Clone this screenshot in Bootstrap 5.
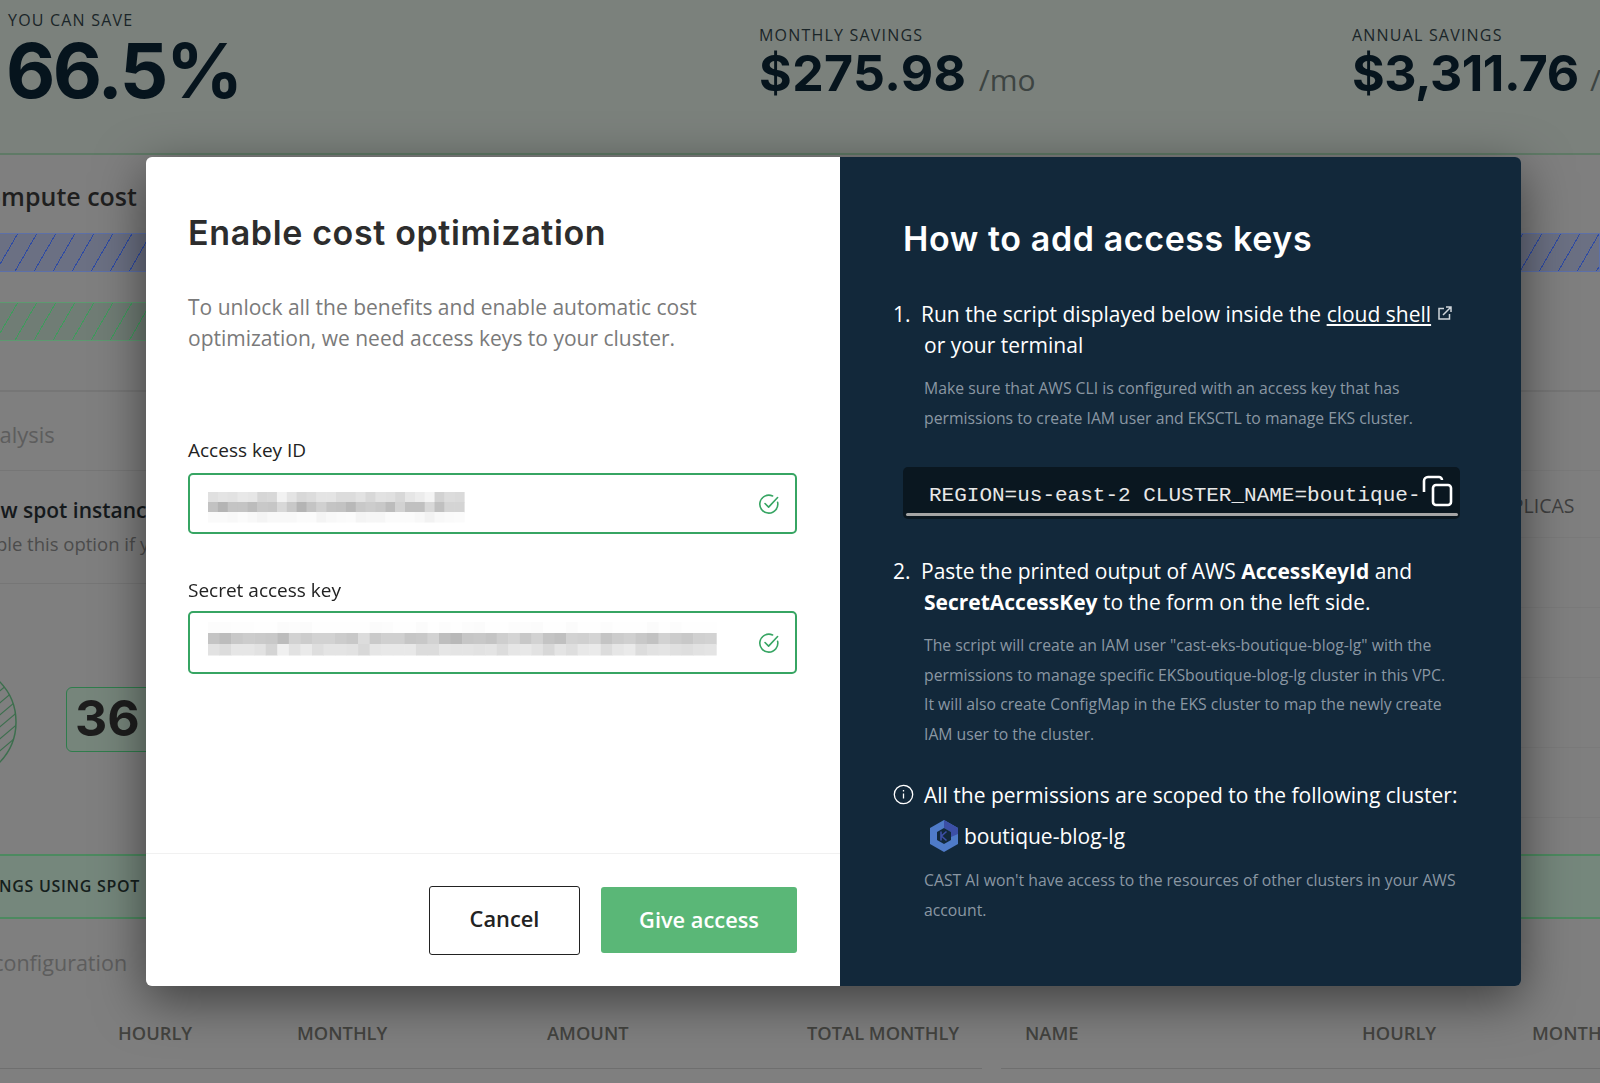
<!DOCTYPE html>
<html>

<head>
  <meta charset='utf-8'>
  <title>Enable cost optimization</title>
  <meta name='viewport' content='width=device-width, initial-scale=1'>
  <link rel="stylesheet" href="https://cdn.jsdelivr.net/npm/bootstrap@5.3.0/dist/css/bootstrap.min.css">
  <style>
    html, body { height: 100%; overflow: hidden; }
    body { background: #7f7f7f; font-family: "Open Sans", sans-serif; color: #2b2b2b; }
    .display-font { font-family: Inter, sans-serif; }

    /* dimmed page behind the dialog */
    .page-back { height: 1083px; overflow: hidden; }
    .save-band { height: 155px; background: #7b817c; border-bottom: 2px solid #5f7a66; display: grid; grid-template-columns: 759px 593px 1fr; color: #06141d; }
    .save-cell { padding-top: 25px; }
    .save-cell.first { padding-top: 10px; padding-left: 8px; }
    .save-label { font-size: 16px; letter-spacing: 1.2px; line-height: 20px; color: #1a2528; font-weight: 400; }
    .save-big { font-size: 76px; line-height: 80px; font-weight: 700; letter-spacing: -2.5px; margin-left: -2px; }
    .save-num { font-size: 50px; line-height: 56px; font-weight: 700; white-space: nowrap; letter-spacing: .4px; }
    .save-num.tight { letter-spacing: -.5px; }
    .save-unit { font-family: "Open Sans", sans-serif; font-size: 30px; font-weight: 400; color: #3d4442; letter-spacing: 0; }

    .cost-block { height: 237px; border-bottom: 2px solid #767676; padding-top: 25px; }
    .cost-title { font-size: 25px; font-weight: 600; line-height: 32px; margin-left: -30px; color: #1f1f1f; }
    .hatch-bar { height: 39px; border: 1px solid; margin-left: -2px; }
    .hatch-blue { margin-top: 21px; border-color: #5d70a8; background: repeating-linear-gradient(120deg, #6b7083 0 15.5px, #2f4ba3 15.5px 16.5px); }
    .hatch-green { margin-top: 30px; width: 60%; border-color: #5d9a70; background: repeating-linear-gradient(120deg, #707d75 0 15.5px, #3f9a5c 15.5px 16.5px); }

    .split-back { display: grid; grid-template-columns: 982px 599px; column-gap: 19px; }
    .back-row { border-bottom: 1px solid #767676; overflow: hidden; }
    .analysis-row { height: 79px; padding-top: 26px; font-size: 22px; color: #5d5d5d; }
    .analysis-row span { margin-left: -28px; }
    .spot-row { height: 113px; padding-top: 22px; }
    .spot-title { font-size: 21px; font-weight: 600; color: #15191c; line-height: 34px; margin-left: -38px; white-space: nowrap; }
    .spot-note { font-size: 18.5px; color: #4c4c4c; line-height: 34px; margin-left: -36px; white-space: nowrap; }
    .chart-row { height: 270px; padding-top: 103px; display: flex; gap: 48px; overflow: hidden; }
    .pie-edge { margin-left: -70px; flex: none; margin-top: -25px; }
    .count-box { width: 110px; height: 65px; flex: none; border: 1.5px solid #2f7d4c; border-radius: 6px; background: #76857b; font-size: 50px; font-weight: 700; line-height: 60px; padding-left: 8px; color: #1d1d1d; }
    .replica-row { height: 67px; padding-top: 20px; padding-left: 488px; font-size: 19.5px; color: #3f3f3f; white-space: nowrap; border-color: #7a7a7a; }
    .thin-row { height: 70px; border-bottom: 1px solid #7a7a7a; }

    .green-band { height: 65px; background: #75877c; border-top: 2px solid #4d8a60; border-bottom: 2px solid #4d8a60; line-height: 61px; font-size: 16px; letter-spacing: .7px; font-weight: 600; color: #15201c; white-space: nowrap; }
    .green-band span { margin-left: -38px; }
    .config-title { height: 82px; padding-top: 28px; font-size: 21.5px; color: #5d5d5d; }
    .config-title span { margin-left: -97px; }
    .table-heads { display: grid; grid-template-columns: 982px 599px; column-gap: 19px; }
    .table-heads > div { height: 68px; border-bottom: 1px solid #6f6f6f; display: flex; font-size: 18.3px; font-weight: 600; color: #43433f; padding-top: 18px; white-space: nowrap; }
    .table-heads span { flex: none; }
    .th-a { width: 179px; } .th-b { width: 250px; } .th-c { width: 260px; }

    /* dialog */
    .cost-dialog { max-width: none; width: 1375px; margin: 157px 0 0 146px; }
    .cost-dialog .modal-content { height: 829px; border: 0; border-radius: 6px; overflow: hidden; flex-direction: row; background: transparent; box-shadow: 0 14px 50px rgba(0, 0, 0, .5); }
    .left-pane { width: 694px; flex: none; background: #fff; display: flex; flex-direction: column; }
    .left-main { padding: 53px 43px 0 42px; flex: 1; }
    .left-main h2 { font-family: Inter, sans-serif; font-weight: 600; font-size: 34px; letter-spacing: .64px; line-height: 46px; color: #2d2d2d; margin: 0 0 36px; }
    .left-main p { font-size: 21px; font-weight: 400; line-height: 31px; color: #7a7a7a; margin: 0 0 84px; }
    .field-label { font-size: 19px; line-height: 24px; color: #222; margin-bottom: 11px; display: block; }
    .key-box { height: 61px; border: 2px solid #37a563; border-radius: 5px; margin-bottom: 44px; display: flex; align-items: center; justify-content: space-between; padding: 0 15px 0 18px; }
    .key-box + .field-label { margin-bottom: 9px; }
    .key-box + .field-label + .key-box { height: 63px; }
    .left-foot { height: 133px; border-top: 1px solid #f1f1f1; display: flex; justify-content: flex-end; align-items: center; gap: 21px; padding: 0 43px 0 0; }
    .btn-cancel, .btn-access { font-size: 21.8px; font-weight: 600; border-radius: 3px; padding: 0; }
    .btn-cancel { width: 151px; height: 69px; border: 1.5px solid #222; color: #222; background: #fff; padding-bottom: 2px; }
    .btn-access { width: 196px; height: 66px; background: #5ab777; border: 0; color: #fff; }

    .right-pane { flex: 1; background: #12283a; color: #fff; padding: 57px 62px 0 63px; }
    .right-pane h2 { font-family: Inter, sans-serif; font-weight: 600; font-size: 34px; letter-spacing: .6px; line-height: 50px; margin: 0 0 35px; }
    .step-line { font-size: 21px; line-height: 31px; margin-left: -10px; position: relative; padding-left: 28px; }
    .step-line b { font-weight: 700; }
    .step-line a { color: #fff; }
    .step-line .step-wrap { margin-left: 3px; }
    .step-no { position: absolute; left: 0; top: 0; }
    .step-note { font-size: 15.75px; line-height: 29.5px; color: #8a97a3; margin-left: 21px; margin-top: 13px; white-space: nowrap; }
    .code-box { position: relative; height: 52px; background: #0a1720; border-radius: 5px; margin: 34px -1px 0 0; padding: 14px 0 0 26px; overflow: hidden; font-family: "Liberation Mono", monospace; font-size: 21px; line-height: 30px; color: #e8e8e8; white-space: nowrap; }
    .code-bar { position: absolute; left: 3px; right: 2px; bottom: 3px; height: 3px; border-radius: 2px; background: #a5a5a5; }
    .copy-mark { position: absolute; right: 6px; top: 8px; }
    .info-mark { position: absolute; left: 0; top: 4px; }
    .cluster-line { display: flex; align-items: center; gap: 4px; font-size: 21px; line-height: 31px; margin: 8px 0 0 25px; }
  </style>
</head>

<body>
  <div class="page-back">
    <div class="save-band">
      <div class="save-cell first">
        <div class="save-label">YOU CAN SAVE</div>
        <div class="save-big display-font">66.5%</div>
      </div>
      <div class="save-cell">
        <div class="save-label">MONTHLY SAVINGS</div>
        <div class="save-num display-font">$275.98 <span class="save-unit">/mo</span></div>
      </div>
      <div class="save-cell">
        <div class="save-label">ANNUAL SAVINGS</div>
        <div class="save-num tight display-font">$3,311.76 <span class="save-unit">/yr</span></div>
      </div>
    </div>

    <div class="cost-block">
      <div class="cost-title">Compute cost</div>
      <div class="hatch-bar hatch-blue"></div>
      <div class="hatch-bar hatch-green"></div>
    </div>

    <div class="split-back">
      <div>
        <div class="back-row analysis-row"><span>Analysis</span></div>
        <div class="back-row spot-row">
          <div class="spot-title">Allow spot instances</div>
          <div class="spot-note">Enable this option if you</div>
        </div>
        <div class="chart-row">
          <svg class="pie-edge" width="88" height="120" viewBox="0 0 88 120">
            <defs>
              <clipPath id="pieClip"><circle cx="28" cy="60" r="58"></circle></clipPath>
            </defs>
            <circle cx="28" cy="60" r="58" fill="none" stroke="#3d6f4e" stroke-width="1.5"></circle>
            <g clip-path="url(#pieClip)" stroke="#3d6f4e" stroke-width="1.2" id="pieLines"></g>
          </svg>
          <div class="count-box display-font">36</div>
        </div>
      </div>
      <div>
        <div class="thin-row" style="height:79px"></div>
        <div class="replica-row back-row">REPLICAS</div>
        <div class="thin-row"></div>
        <div class="thin-row"></div>
        <div class="thin-row"></div>
        <div class="thin-row"></div>
      </div>
    </div>

    <div class="green-band"><span>SAVINGS USING SPOT INSTANCES</span></div>
    <div class="config-title"><span>Instance configuration</span></div>
    <div class="table-heads">
      <div>
        <span style="width:118px"></span><span class="th-a">HOURLY</span><span class="th-b">MONTHLY</span><span class="th-c">AMOUNT</span><span>TOTAL MONTHLY</span>
      </div>
      <div>
        <span style="width:24px"></span><span style="width:337px">NAME</span><span style="width:170px">HOURLY</span><span>MONTHLY</span>
      </div>
    </div>
  </div>

  <div class="modal d-block" tabindex="-1">
    <div class="modal-dialog cost-dialog">
      <div class="modal-content">
        <div class="left-pane">
          <div class="left-main">
            <h2>Enable cost optimization</h2>
            <p>To unlock all the benefits and enable automatic cost<br>optimization, we need access keys to your cluster.</p>

            <label class="field-label">Access key ID</label>
            <div class="key-box">
              <svg class="blur-keys" data-set="0" width="290" height="44"></svg>
              <svg width="22" height="22" viewBox="0 0 22 22" fill="none" stroke="#37a563" stroke-width="1.6" stroke-linecap="round" stroke-linejoin="round">
                <path d="M19.6 9.2A9 9 0 1 1 14.6 3"></path>
                <path d="M7 10.5l3.6 3.6 9-9.6"></path>
              </svg>
            </div>

            <label class="field-label">Secret access key</label>
            <div class="key-box">
              <svg class="blur-keys" data-set="1" width="520" height="44"></svg>
              <svg width="22" height="22" viewBox="0 0 22 22" fill="none" stroke="#37a563" stroke-width="1.6" stroke-linecap="round" stroke-linejoin="round">
                <path d="M19.6 9.2A9 9 0 1 1 14.6 3"></path>
                <path d="M7 10.5l3.6 3.6 9-9.6"></path>
              </svg>
            </div>
          </div>
          <div class="left-foot">
            <button class="btn btn-cancel" type="button">Cancel</button>
            <button class="btn btn-access" type="button">Give access</button>
          </div>
        </div>

        <div class="right-pane">
          <h2>How to add access keys</h2>

          <div class="step-line">
            <span class="step-no">1.</span>Run the script displayed below inside the <a href="#!">cloud shell</a>
            <svg width="15" height="15" viewBox="0 0 15 15" fill="none" stroke="#cfd5da" stroke-width="1.5" style="vertical-align:1px">
              <path d="M7 2.500H2v10.500h10.500V8"></path>
              <path d="M6 9l7.500-7.500M9 1h5v5"></path>
            </svg>
            <br><span class="step-wrap">or your terminal</span>
          </div>
          <div class="step-note">Make sure that AWS CLI is configured with an access key that has<br>permissions to create IAM user and EKSCTL to manage EKS cluster.</div>

          <div class="code-box">
            REGION=us-east-2 CLUSTER_NAME=boutique-
            <svg class="copy-mark" width="33" height="32" viewBox="0 0 33 32" fill="none" stroke="#fff" stroke-width="2.6" stroke-linejoin="round">
              <path d="M3 17V6a4 4 0 0 1 4-4h11a3 3 0 0 1 3 3"></path>
              <rect x="12" y="10" width="18" height="20" rx="3" fill="#0a1720"></rect>
            </svg>
            <div class="code-bar"></div>
          </div>

          <div class="step-line" style="margin-top:37px">
            <span class="step-no">2.</span>Paste the printed output of AWS <b>AccessKeyId</b> and<br><span class="step-wrap"><b>SecretAccessKey</b> to the form on the left side.</span>
          </div>
          <div class="step-note">The script will create an IAM user "cast-eks-boutique-blog-lg" with the<br>permissions to manage specific EKSboutique-blog-lg cluster in this VPC.<br>It will also create ConfigMap in the EKS cluster to map the newly create<br>IAM user to the cluster.</div>

          <div class="step-line" style="margin-top:31px;padding-left:31px">
            <svg class="info-mark" width="21" height="21" viewBox="0 0 21 21" fill="none" stroke="#fff" stroke-width="1.3">
              <circle cx="10.500" cy="10.500" r="9.200"></circle>
              <path d="M10.500 9.500v5M10.500 6v1.600"></path>
            </svg>
            All the permissions are scoped to the following cluster:
          </div>
          <div class="cluster-line">
            <svg width="32" height="34" viewBox="0 0 32 34">
              <path d="M16 1L30 9v16l-14 8L2 25V9z" fill="#4f7bc8"></path>
              <path d="M16 1L30 9v6l-7 3v-5l-7-4z" fill="#3c4fa6"></path>
              <path d="M16 9l7 4v8l-7 4-7-4v-8z" fill="#12283a"></path>
              <path d="M13 12.500v9M18.500 12.500L13.500 17l5 4.500" fill="none" stroke="#3c4fa6" stroke-width="1.6"></path>
            </svg>
            boutique-blog-lg
          </div>
          <div class="step-note" style="margin-top:13px">CAST AI won't have access to the resources of other clusters in your AWS<br>account.</div>
        </div>
      </div>
    </div>
  </div>

  <script src="https://cdn.jsdelivr.net/npm/bootstrap@5.3.0/dist/js/bootstrap.bundle.min.js"></script>
  <script>
    // pixelated key values, grey levels per cell
    const keySets = [
      { w: 9.85, h: 10, top: 10, rows: [
        [0xe0,0xe4,0xe2,0xe8,0xe6,0xd6,0xd8,0xf2,0xe4,0xd8,0xdc,0xe4,0xe4,0xdc,0xdc,0xe2,0xd8,0xe2,0xe0,0xd8,0xe6,0xec,0xf4,0xd2,0xdc,0xda],
        [0xc2,0xb4,0xc4,0xc4,0xbc,0xc8,0xc6,0xd8,0xc8,0xb4,0xc4,0xd0,0xc4,0xc2,0xb8,0xc8,0xcc,0xc8,0xbc,0xd2,0xc0,0xc0,0xd8,0xc0,0xd4,0xd4],
        [0xfa,0xfa,0xf8,0xfb,0xf8,0xf4,0xf8,0xf8,0xf8,0xfb,0xfb,0xf4,0xf8,0xfa,0xfb,0xf4,0xf6,0xf6,0xfb,0xfb,0xfb,0xf8,0xf2,0xf8,0xfa,0xfb]
      ] },
      { w: 11.55, h: 11, top: 1, rows: [
        [0xfc,0xfc,0xfd,0xfd,0xfe,0xfe,0xfb,0xfc,0xfb,0xfe,0xfe,0xfe,0xfe,0xfe,0xfb,0xfc,0xfe,0xfe,0xfb,0xfe,0xfc,0xfe,0xfc,0xfb,0xfe,0xfe,0xfc,0xfc,0xfb,0xfe,0xfe,0xfb,0xfe,0xfe,0xfc,0xfe,0xfe,0xfe,0xfb,0xfe,0xfc,0xfe,0xfe,0xfe],
        [0xc4,0xbc,0xc8,0xcc,0xca,0xc8,0xbc,0xd2,0xcc,0xd2,0xd2,0xcc,0xc8,0xdc,0xca,0xd0,0xd0,0xc6,0xc8,0xd2,0xbe,0xb8,0xc6,0xc8,0xc4,0xce,0xd4,0xc8,0xd2,0xc4,0xc0,0xd2,0xd0,0xd4,0xc4,0xcc,0xd0,0xc8,0xc2,0xd2,0xcc,0xc8,0xd0,0xd2],
        [0xe2,0xdc,0xe6,0xe6,0xe2,0xd4,0xf0,0xe2,0xea,0xde,0xe4,0xe4,0xe2,0xd8,0xe6,0xe8,0xe8,0xe8,0xdc,0xdc,0xe6,0xe4,0xe4,0xe2,0xe4,0xdc,0xe6,0xe8,0xe2,0xd8,0xe4,0xde,0xe8,0xea,0xdc,0xe6,0xea,0xdc,0xe2,0xe4,0xe0,0xde,0xe2,0xe4]
      ] }
    ];
    document.querySelectorAll(".blur-keys").forEach(svg => {
      const set = keySets[+svg.dataset.set];
      let out = '<filter id="soft' + svg.dataset.set + '"><feGaussianBlur stdDeviation="0.5"/></filter><g filter="url(#soft' + svg.dataset.set + ')">';
      set.rows.forEach((row, r) => row.forEach((g, c) => {
        out += '<rect x="' + (c * set.w) + '" y="' + (set.top + r * set.h) + '" width="' + (set.w + .5) + '" height="' + (set.h + .5) + '" fill="rgb(' + g + ',' + g + ',' + g + ')"/>';
      }));
      svg.innerHTML = out + '</g>';
    });

    let pie = "";
    for (let i = -80; i < 120; i += 12) pie += '<line x1="-30" y1="' + (i + 60) + '" x2="90" y2="' + (i - 40) + '"/>';
    document.getElementById("pieLines").innerHTML = pie;
  </script>
</body>

</html>
